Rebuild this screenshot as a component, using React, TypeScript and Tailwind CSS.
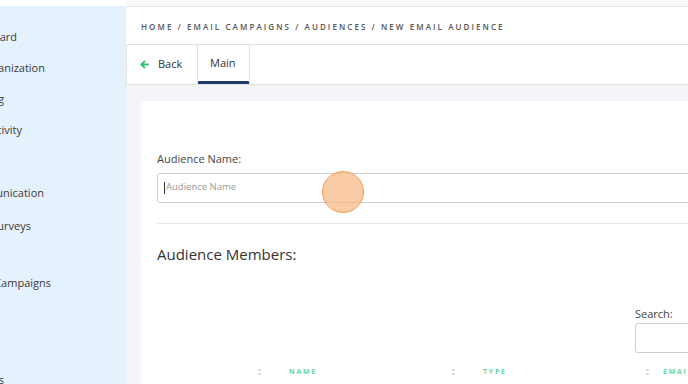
import React from "react";

const SortIcon = () => (
  <svg width="5" height="8" viewBox="0 0 5 8" className="shrink-0">
    <path d="M2.5 0.5 L4.5 3 L0.5 3 Z" fill="#d4d4d4" />
    <path d="M2.5 7.5 L4.5 5 L0.5 5 Z" fill="#d4d4d4" />
  </svg>
);

const SideItem = ({ text, end, y }: { text: string; end: number; y: number }) => (
  <div className="absolute left-0 flex justify-end whitespace-nowrap text-[11px] leading-[14px] text-[#3a3a3a]" style={{ width: end, top: y - 7 }}>
    {text}
  </div>
);

export default function App() {
  return (
    <div className="w-[688px] h-[384px] overflow-hidden flex bg-white" style={{ fontFamily: '"Open Sans", "Liberation Sans", sans-serif' }}>
      {/* Sidebar */}
      <div className="w-[126px] shrink-0 flex flex-col bg-white">
        <div className="h-[6px]" />
        <div className="flex-1 bg-[#e5f1fc] relative overflow-hidden">
          <SideItem text="Dashboard" end={17} y={31} />
          <SideItem text="My Organization" end={45} y={62} />
          <SideItem text="Billing" end={4} y={93} />
          <SideItem text="Activity" end={22} y={124} />
          <SideItem text="Communication" end={44} y={187} />
          <SideItem text="Surveys" end={31} y={220} />
          <SideItem text="Email Campaigns" end={51} y={277} />
          <SideItem text="Settings" end={4} y={374} />
        </div>
      </div>

      {/* Main */}
      <div className="flex-1 flex flex-col min-w-0 overflow-hidden">
        <div className="h-[7px] bg-[#fafafa] border-b border-[#e4e4e4] shrink-0" />
        <div className="h-[38px] shrink-0 bg-white border-b border-[#e2e2e2] flex items-center pl-[15px] pt-[2px]">
          <span className="text-[8px] font-semibold tracking-[0.26em] text-[#555] whitespace-nowrap">
            HOME / EMAIL CAMPAIGNS / AUDIENCES / NEW EMAIL AUDIENCE
          </span>
        </div>
        <div className="h-[40px] shrink-0 bg-white border-b border-l border-[#e2e2e2] flex">
          <div className="w-[71px] border-r border-[#e2e2e2] flex items-center pl-[13px] gap-[9px]">
            <svg width="9" height="9" viewBox="0 0 10 10">
              <path d="M9 5 H2 M5 1.5 L1.5 5 L5 8.5" stroke="#2fc46f" strokeWidth="2" fill="none" strokeLinecap="round" strokeLinejoin="round" />
            </svg>
            <span className="text-[11px] text-[#333]">Back</span>
          </div>
          <div className="w-[52px] border-r border-[#e2e2e2] relative flex items-center pl-[12px]">
            <span className="text-[11px] text-[#333] -mt-[2px]">Main</span>
            <div className="absolute left-0 right-0 bottom-0 h-[3px] bg-[#1b3a6b] rounded-t-[1px]" />
          </div>
        </div>
        <div className="flex-1 bg-[#f3f4f8] pl-[15px] pt-[16px] overflow-hidden">
          <div className="bg-white h-full w-[700px] pl-[16px] pt-[51px] relative">
            <div className="text-[11px] leading-[14px] text-[#444]">Audience Name:</div>
            <div className="mt-[7px] h-[30px] border border-[#cfcfcf] rounded-[3px] flex items-center pl-[6px] pb-[1px]">
              <span className="w-px h-[12px] bg-[#333] mr-[1px]" />
              <span className="text-[9.5px] text-[#9a9a9a]">Audience Name</span>
            </div>
            <div className="mt-[20px] border-t border-[#e6e6e6]" />
            <div className="mt-[20px] text-[15px] leading-[20px] font-medium text-[#333]">Audience Members:</div>
            <div className="mt-[43px] pl-[478px] text-[11px] leading-[14px] text-[#444]">Search:</div>
            <div className="ml-[478px] mt-[2px] h-[30px] border border-[#cfcfcf] rounded-[3px]" />
            <div className="mt-[14px] flex items-center h-[10px]">
              <div className="w-[118px] shrink-0 flex justify-end pr-[13px]"><SortIcon /></div>
              <div className="w-[194px] shrink-0 flex items-center justify-between pl-[14px] pr-[13px]">
                <span className="text-[7px] font-bold tracking-[0.25em] text-[#6dd49c]">NAME</span>
                <SortIcon />
              </div>
              <div className="w-[194px] shrink-0 flex items-center justify-between pl-[14px] pr-[13px]">
                <span className="text-[7px] font-bold tracking-[0.25em] text-[#6dd49c]">TYPE</span>
                <SortIcon />
              </div>
              <div className="shrink-0 flex items-center">
                <span className="text-[7px] font-bold tracking-[0.25em] text-[#6dd49c] whitespace-nowrap">EMAIL</span>
              </div>
            </div>
            {/* click indicator */}
            <div className="absolute left-[181px] top-[70px] w-[42px] h-[42px] rounded-full bg-[#f7b67f]/70 border border-[#f0a060]" />
          </div>
        </div>
      </div>
    </div>
  );
}
